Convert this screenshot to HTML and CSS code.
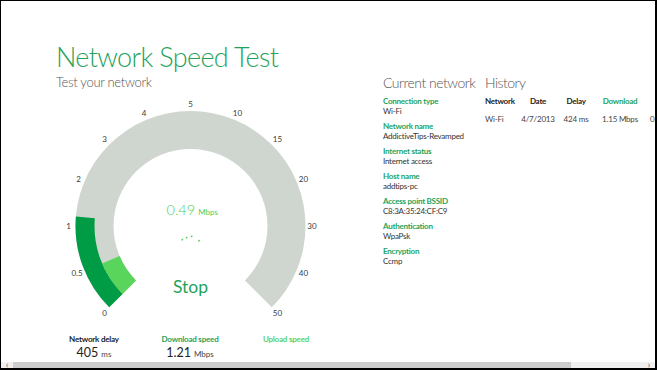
FILE: index.html
```html
<!DOCTYPE html>
<html>
<head>
<meta charset="utf-8">
<link rel="stylesheet" href="styles.css">
</head>
<body>
<div class="page">
  <div class="content">
    <div class="left">
      <h1 class="title">Network Speed Test</h1>
      <div class="subtitle">Test your network</div>
      <svg class="gauge" width="289" height="232" viewBox="46 100 289 232">
        <path class="arc-bg" d="M109.18 308.32 A115 115 0 1 1 271.82 308.32 L244.95 281.45 A77 77 0 1 0 136.05 281.45 Z"/>
        <path class="arc-dl" d="M109.18 308.32 A115 115 0 0 1 75.89 217.58 L94.82 219.13 A96 96 0 0 0 122.62 294.88 Z"/>
        <path class="arc-cur" d="M122.62 294.88 A96 96 0 0 1 102.13 264.51 L119.62 257.08 A77 77 0 0 0 136.05 281.45 Z"/>
        <g class="ticks">
          <text x="104.5" y="314">0</text>
          <text x="77" y="274">0.5</text>
          <text x="68.5" y="227">1</text>
          <text x="78.5" y="180">2</text>
          <text x="104.5" y="140">3</text>
          <text x="144" y="114">4</text>
          <text x="190.5" y="105">5</text>
          <text x="237.5" y="114">10</text>
          <text x="277.5" y="140">15</text>
          <text x="303.5" y="180">20</text>
          <text x="312" y="227">30</text>
          <text x="303.5" y="274">40</text>
          <text x="277.5" y="314">50</text>
        </g>
        <text class="speed" x="166.5" y="216">0.49<tspan class="speed-unit" dx="3">Mbps</tspan></text>
        <g class="dots">
          <circle cx="182.3" cy="240.7" r="0.9"/>
          <circle cx="186.7" cy="238.7" r="0.9"/>
          <circle cx="191.7" cy="237.3" r="0.9"/>
          <circle cx="199" cy="241.7" r="0.9"/>
        </g>
        <text class="stop" x="190.5" y="294">Stop</text>
      </svg>
      <div class="stats">
        <div class="stat">
          <div class="stat-label">Network delay</div>
          <div class="stat-value">405<span class="unit">ms</span></div>
        </div>
        <div class="stat">
          <div class="stat-label green">Download speed</div>
          <div class="stat-value">1.21<span class="unit">Mbps</span></div>
        </div>
        <div class="stat">
          <div class="stat-label light">Upload speed</div>
          <div class="stat-value"></div>
        </div>
      </div>
    </div>
    <div class="current">
      <h2 class="section">Current network</h2>
      <div class="field"><div class="f-label">Connection type</div><div class="f-value">Wi-Fi</div></div>
      <div class="field"><div class="f-label">Network name</div><div class="f-value">AddictiveTips-Revamped</div></div>
      <div class="field"><div class="f-label">Internet status</div><div class="f-value">Internet access</div></div>
      <div class="field"><div class="f-label">Host name</div><div class="f-value">addtips-pc</div></div>
      <div class="field"><div class="f-label">Access point BSSID</div><div class="f-value">C8:3A:35:24:CF:C9</div></div>
      <div class="field"><div class="f-label">Authentication</div><div class="f-value">WpaPsk</div></div>
      <div class="field"><div class="f-label">Encryption</div><div class="f-value">Ccmp</div></div>
    </div>
    <div class="history">
      <h2 class="section">History</h2>
      <div class="table">
        <div class="th c1">Network</div>
        <div class="th c2">Date</div>
        <div class="th c3">Delay</div>
        <div class="th c4 green">Download</div>
        <div class="th c5 light">Upload</div>
        <div class="td c1">Wi-Fi</div>
        <div class="td c2">4/7/2013</div>
        <div class="td c3">424 ms</div>
        <div class="td c4">1.15 Mbps</div>
        <div class="td c5">0.00 Mbps</div>
      </div>
    </div>
  </div>
  <div class="scrollbar">
    <span class="arrow">&#8249;</span>
    <div class="thumb"></div>
    <div class="track"></div>
    <span class="arrow">&#8250;</span>
  </div>
</div>
</body>
</html>
```

FILE: styles.css
```css
html, body {
  margin: 0;
  padding: 0;
  background: #fff;
}
body {
  font-family: "Lato", "Open Sans", sans-serif;
  color: #333;
}
.page {
  width: 657px;
  height: 370px;
  box-sizing: border-box;
  border-top: 1px solid #000;
  border-left: 1px solid #000;
  border-right: 2px solid #000;
  border-bottom: 2px solid #000;
  display: flex;
  flex-direction: column;
  overflow: hidden;
  background: #fff;
}
.content {
  flex: 1;
  display: flex;
  padding-left: 45px;
  overflow: hidden;
}
.left {
  width: 289px;
  flex: none;
  display: flex;
  flex-direction: column;
}
.title {
  margin: 41px 0 0 10px;
  font-size: 27px;
  line-height: 30px;
  font-weight: 300;
  letter-spacing: -0.65px;
  color: #1fa35a;
  white-space: nowrap;
}
.subtitle {
  margin: 2px 0 0 10px;
  font-size: 13px;
  line-height: 16px;
  font-weight: 300;
  letter-spacing: -0.3px;
  color: #555;
}
.gauge {
  display: block;
  margin-top: 9px;
}
.arc-bg { fill: #cfd5cf; }
.arc-dl { fill: #009b45; }
.arc-cur { fill: #58d55a; }
.ticks text {
  font-size: 8px;
  fill: #3a3a3a;
  text-anchor: middle;
  dominant-baseline: central;
}
.speed {
  font-size: 14.5px;
  font-weight: 300;
  fill: #4fce55;
}
.speed-unit { font-size: 8px; font-weight: 400; }
.dots circle { fill: #4fce55; }
.stop {
  font-size: 17.5px;
  fill: #1fa35a;
  text-anchor: middle;
}
.stats {
  display: grid;
  grid-template-columns: 96px 96px 96px;
  margin-top: 3px;
}
.stat { text-align: center; }
.stat-label {
  font-size: 8px;
  line-height: 10px;
  color: #222;
  font-weight: 700;
  letter-spacing: -0.2px;
}
.stat-label.green { color: #1fa35a; }
.stat-label.light { color: #5ad35d; }
.stat-value {
  margin-top: 2px;
  font-size: 12.5px;
  line-height: 13px;
  color: #222;
}
.unit {
  font-size: 8px;
  margin-left: 3px;
  color: #444;
}
.current {
  width: 102px;
  flex: none;
  margin-left: 48px;
}
.section {
  margin: 73px 0 0 0;
  font-size: 14px;
  line-height: 18px;
  font-weight: 300;
  letter-spacing: -0.5px;
  color: #555;
  white-space: nowrap;
}
.field { margin-bottom: 5px; }
.f-label {
  font-size: 8px;
  line-height: 10px;
  font-weight: 700;
  letter-spacing: -0.25px;
  color: #1fa35a;
  white-space: nowrap;
}
.f-value {
  font-size: 8px;
  line-height: 10px;
  letter-spacing: -0.25px;
  color: #333;
  white-space: nowrap;
}
.current .field:first-of-type { margin-top: 4px; }
.history {
  flex: 1;
  overflow: hidden;
}
.table {
  margin-top: 4px;
  display: grid;
  grid-template-columns: 35px 36px 40px 48px 48px;
  row-gap: 8px;
  white-space: nowrap;
}
.th {
  font-size: 8px;
  line-height: 10px;
  font-weight: 700;
  letter-spacing: -0.25px;
  color: #222;
}
.td {
  font-size: 8px;
  line-height: 10px;
  letter-spacing: -0.2px;
  color: #444;
}
.c2, .c3, .c4, .c5 { text-align: center; }
.th.green { color: #1fa35a; }
.th.light { color: #5ad35d; }
.scrollbar {
  height: 6px;
  flex: none;
  display: flex;
  align-items: center;
  background: #f0f0f0;
}
.arrow {
  font-size: 9px;
  line-height: 6px;
  color: #555;
  width: 12px;
  text-align: center;
  flex: none;
}
.thumb {
  width: 558px;
  height: 6px;
  background: #cdcdcd;
  flex: none;
}
.track { flex: 1; }
```
